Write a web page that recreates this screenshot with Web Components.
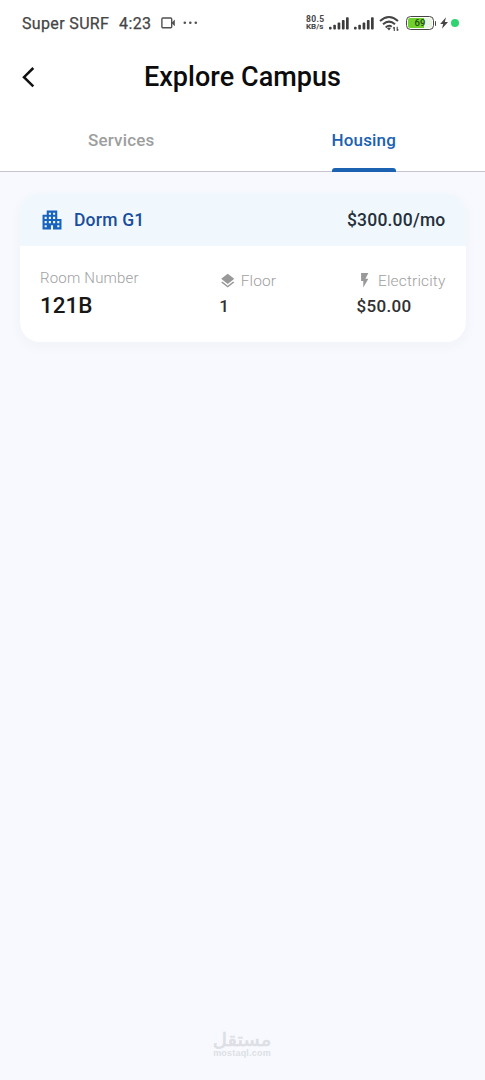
<!DOCTYPE html>
<html lang="en">
<head>
<meta charset="utf-8">
<title>Explore Campus</title>
<style>
html,body{margin:0;height:100%}
body{background:#f7f9fe;font-family:Roboto,"Noto Sans",sans-serif;overflow:hidden}
</style>
</head>
<body>
<campus-screen></campus-screen>
<script>
const define = (name, html) => customElements.define(name, class extends HTMLElement {
  constructor() {
    super();
    this.attachShadow({mode: 'open'}).innerHTML = html;
  }
});

define('signal-bars', `
<style>:host{display:block;width:20px;height:13px}svg{display:block}</style>
<svg width="20" height="13" viewBox="0 0 20 13" fill="#3d3d3d"><rect x="0" y="9.8" width="2.6" height="2.7" rx=".8"/><rect x="4.3" y="7.8" width="2.6" height="4.7" rx=".8"/><rect x="8.6" y="5.6" width="2.7" height="6.9" rx=".8"/><rect x="12.9" y="3" width="2.7" height="9.5" rx=".8"/><rect x="17" y=".3" width="2.7" height="12.2" rx=".8"/></svg>`);

define('battery-level', `
<style>
:host{display:flex;align-items:center;width:31px;height:15px}
.cell{box-sizing:border-box;width:28px;height:14px;border:1.4px solid #454545;border-radius:4.5px;padding:1px}
.fill{width:100%;height:100%;border-radius:2px;background:linear-gradient(90deg,#6fd02f 68%,#e9f5e2 68%);font:500 9.5px/10px Roboto,sans-serif;color:#234a12;text-align:center}
.cap{width:1.5px;height:5px;background:#454545;border-radius:0 1px 1px 0;margin-left:.7px}
</style>
<div class="cell"><div class="fill"><slot></slot></div></div><div class="cap"></div>`);

define('status-bar', `
<style>
:host{display:flex;align-items:center;height:46px;box-sizing:border-box;padding:0 26px 0 22px;color:#454545}
.carrier{font-size:16px;letter-spacing:.35px;font-weight:400;-webkit-text-stroke:.25px #454545;white-space:pre;width:88px;margin-right:9px}
.time{font-size:16px;font-weight:400;-webkit-text-stroke:.25px #454545;letter-spacing:.4px;width:34px;margin-right:8px}
svg{display:block;flex:none}
.space{flex:1}
.speed{font:700 8.5px/8px Roboto,sans-serif;width:20px;margin-right:3px;letter-spacing:.35px;white-space:nowrap}
.speed div+div{font-size:8px;letter-spacing:0}
signal-bars{margin-right:5px}
.dot{width:8px;height:8px;border-radius:50%;background:#2fd36f;margin-left:2px}
</style>
<div class="carrier">Super SURF</div><div class="time">4:23</div>
<svg width="15" height="12" viewBox="0 0 15 12"><rect x=".9" y="1" width="9.8" height="9.8" rx="1" fill="none" stroke="#505050" stroke-width="1.4"/><path d="M10.5 5.9L13.8 2.6v6.6z" fill="#505050"/></svg>
<svg style="margin-left:7px" width="16" height="4" viewBox="0 0 16 4" fill="#505050"><circle cx="1.8" cy="1.7" r="1.3"/><circle cx="7.3" cy="1.7" r="1.3"/><circle cx="12.8" cy="1.7" r="1.3"/></svg>
<div class="space"></div>
<div class="speed"><div>80.5</div><div>KB/s</div></div>
<signal-bars></signal-bars><signal-bars></signal-bars>
<svg style="margin-right:6px" width="21" height="17" viewBox="0 0 21 17" fill="none" stroke="#454545" stroke-width="2"><path d="M1 6Q10 -2 19 6M4 9.3Q10 4 16 9.3M6.7 12.4Q10 9.4 12.7 11.8"/><path d="M8 13.2Q10 11.8 11.8 13.2L10 15.6z" fill="#454545" stroke="none"/><path d="M15.3 16v-4m-1.2 1.3l1.2-1.3M18.2 11.7v4m1.2-1.2l-1.2 1.2" stroke-width="1.1"/></svg>
<battery-level>69</battery-level>
<svg style="margin-left:2px" width="10" height="14" viewBox="0 0 10 14"><path d="M7 1.3L1.2 8h3L3 12.8 9 6H5.8z" fill="#454545"/></svg>
<div class="dot"></div>`);

define('page-header', `
<style>
:host{display:grid;grid-template-columns:52px 1fr 52px;align-items:center;height:62px}
h1{margin:0;padding-bottom:1px;text-align:center;font-size:27px;line-height:32px;font-weight:500;color:#0c0c0c;white-space:nowrap;letter-spacing:.05px}
svg{display:block;margin-left:21px}
</style>
<svg width="16" height="22" viewBox="0 0 16 22"><path d="M12.3 2L3 11.2l9.3 9.1" fill="none" stroke="#111" stroke-width="2.5"/></svg>
<h1><slot></slot></h1>`);

define('tab-item', `
<style>
:host{display:flex;justify-content:center;flex:1;height:64px;color:#9e9e9e;font-size:17px;font-weight:500}
.label{position:relative;line-height:65px;letter-spacing:.15px;height:64px}
:host([selected]){color:#1c62b2}
:host([selected]) .label::after{content:"";position:absolute;left:0;right:0;bottom:0;height:4px;border-radius:3px 3px 0 0;background:#1c62b2}
</style><div class="label"><slot></slot></div>`);

define('tab-strip', `
<style>:host{display:flex;height:64px;box-sizing:border-box;background:linear-gradient(#c6c4ce,#c6c4ce) bottom/100% 1px no-repeat}</style><slot></slot>`);

define('detail-field', `
<style>
:host{display:block;white-space:nowrap}
.label{display:flex;align-items:center;gap:6px;font-size:15.5px;line-height:20px;font-weight:300;color:#a0a0a0;letter-spacing:.15px}
.value{font-size:17px;line-height:20px;margin-top:5px;padding-left:.5px;font-weight:500;color:#303030;letter-spacing:.35px}
:host([large]) .label{font-size:15px;letter-spacing:.2px}
:host([large]) .value{font-size:22.5px;line-height:26px;margin:4px 0 1px;padding:0;color:#171717;letter-spacing:0}
</style>
<div class="label"><slot name="icon"></slot><slot name="label"></slot></div><div class="value"><slot></slot></div>`);

define('housing-card', `
<style>
:host{display:block;margin:21px 19px 0 20px;border-radius:20px;background:#fff;overflow:hidden;box-shadow:0 4px 14px rgba(50,65,100,.035)}
header{display:flex;align-items:center;height:53px;box-sizing:border-box;padding:0 20.5px 0 22px;background:#f0f8fe;font-size:17.5px;font-weight:500}
header svg{display:block;margin-right:12px}
.name{color:#1a4d9c;flex:1;letter-spacing:.2px}
.price{color:#26303a;letter-spacing:.2px}
.body{display:flex;justify-content:space-between;align-items:center;height:96px;box-sizing:border-box;padding:0 20.5px 1px 20px}
</style>
<header>
<svg width="20" height="20" viewBox="2.5 2.5 19 19"><path d="M17 11V3H7v4H3v14h8v-4h2v4h8V11h-4zM7 19H5v-2h2v2zm0-4H5v-2h2v2zm0-4H5V9h2v2zm4 4H9v-2h2v2zm0-4H9V9h2v2zm0-4H9V5h2v2zm4 8h-2v-2h2v2zm0-4h-2V9h2v2zm0-4h-2V5h2v2zm4 12h-2v-2h2v2zm0-4h-2v-2h2v2z" fill="#1763bd"/></svg>
<span class="name"><slot name="name"></slot></span><span class="price"><slot name="price"></slot></span>
</header>
<div class="body"><slot></slot></div>`);

define('site-watermark', `
<style>
:host{display:block;width:80px;text-align:center;color:#dddfe5}
.ar{font:400 18px/22px "DejaVu Sans",sans-serif;-webkit-text-stroke:.6px #dddfe5;height:20px;transform:scaleX(1.09)}
.en{font:700 9px/9px "Liberation Sans",sans-serif;letter-spacing:.2px}
</style><div class="ar" dir="rtl" lang="ar">مستقل</div><div class="en">mostaql.com</div>`);

define('campus-screen', `
<style>
:host{display:flex;flex-direction:column;height:1080px;width:485px}
.top{background:#fff;height:172px}
main{flex:1}
footer{display:flex;justify-content:center;height:51px;padding-right:1px}
svg{display:block}
</style>
<div class="top">
<status-bar></status-bar>
<page-header>Explore Campus</page-header>
<tab-strip><tab-item>Services</tab-item><tab-item selected>Housing</tab-item></tab-strip>
</div>
<main>
<housing-card>
<span slot="name">Dorm G1</span><span slot="price">$300.00/mo</span>
<detail-field large><span slot="label">Room Number</span>121B</detail-field>
<detail-field><svg slot="icon" width="16" height="16" viewBox="0 1 22 22"><path d="M11.99 18.54l-7.37-5.73L3 14.07l9 7 9-7-1.63-1.27-7.38 5.74zM12 16l7.36-5.73L21 9l-9-7-9 7 1.63 1.27L12 16z" fill="#999"/></svg><span slot="label">Floor</span>1</detail-field>
<detail-field><svg slot="icon" width="16" height="16" viewBox="0 2 22 22"><path d="M7 2v11h3v9l7-12h-4l4-8z" fill="#999"/></svg><span slot="label">Electricity</span>$50.00</detail-field>
</housing-card>
</main>
<footer><site-watermark></site-watermark></footer>`);
</script>
</body>
</html>
